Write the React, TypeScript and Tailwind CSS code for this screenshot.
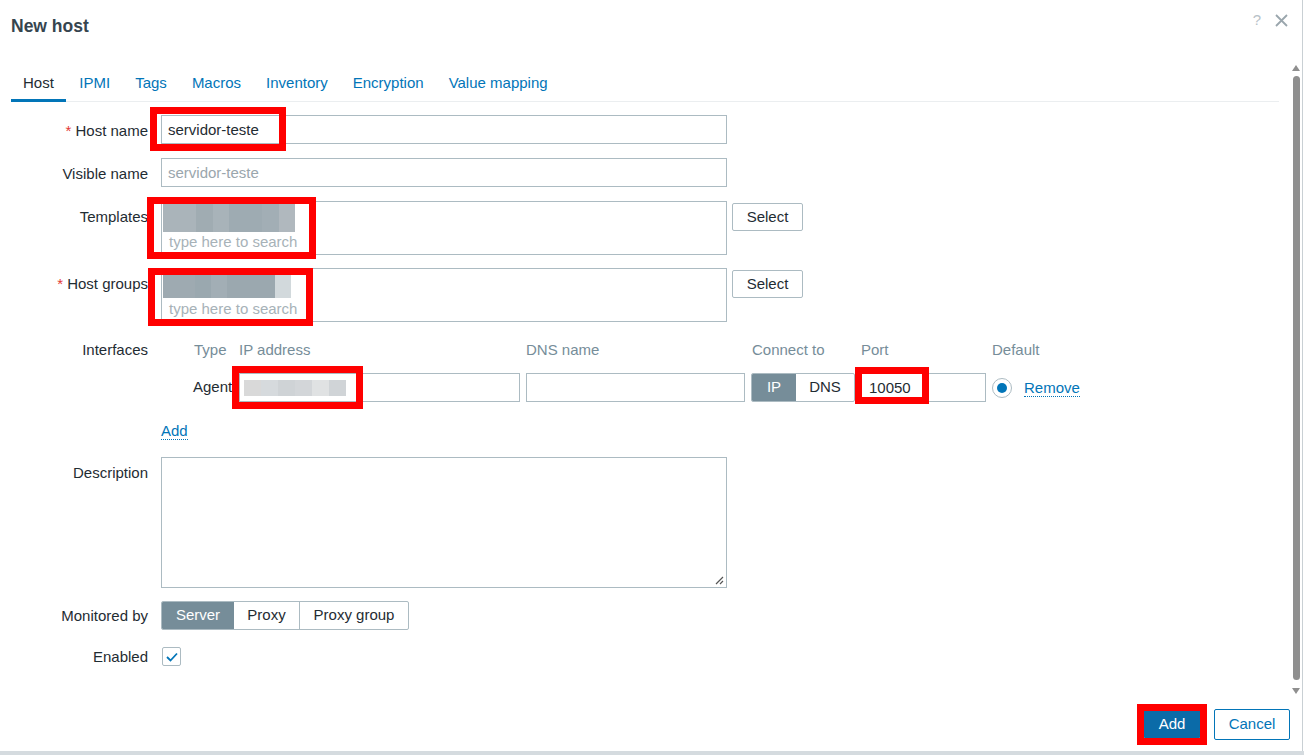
import React from 'react'

// ─── Small pieces ──────────────────────────────────────────────────────────

const font = "font-['Liberation_Sans',Arial,sans-serif]"

function Label({ text, required, pt = 'pt-[7px]' }: { text: string; required?: boolean; pt?: string }) {
  return (
    <div className={`w-[137px] shrink-0 ${pt} text-right leading-[18px] text-[#1f2c33]`}>
      {required && <span className="mr-[4px] text-[#e33734]">*</span>}
      {text}
    </div>
  )
}

function Blur({ blocks, h }: { blocks: [number, string][]; h: string }) {
  return (
    <div className={`flex ${h}`}>
      {blocks.map(([w, c], i) => (
        <div key={i} className={h} style={{ width: w, background: c }} />
      ))}
    </div>
  )
}

function RedBox({ x, y, w, h }: { x: number; y: number; w: number; h: number }) {
  return (
    <div
      className="pointer-events-none absolute border-[7px] border-[#ff0000]"
      style={{ left: x, top: y, width: w, height: h }}
    />
  )
}

function SelectBtn() {
  return (
    <button className="ml-[5px] mt-[2px] h-[28px] w-[71px] rounded-[2px] border border-[#acbbc2] bg-white text-[15px] text-[#1f2c33]">
      Select
    </button>
  )
}

// ─── Component ─────────────────────────────────────────────────────────────

export default function App() {
  const tabs = ['Host', 'IPMI', 'Tags', 'Macros', 'Inventory', 'Encryption', 'Value mapping']

  return (
    <div className={`relative h-[755px] w-[1304px] overflow-hidden bg-white text-[15px] text-[#1f2c33] ${font}`}>
      <div className="flex h-[751px] w-[1303px] flex-col border-r border-[#c9d0d4]">
        {/* Header */}
        <div className="flex h-[52px] shrink-0 items-center justify-between pl-[11px] pr-[14px]">
          <h1 className="text-[17.5px] font-bold text-[#36454f]">New host</h1>
          <div className="flex items-center gap-[14px] pb-[12px]">
            <span className="text-[15px] text-[#b8c2c8]">?</span>
            <svg width="13" height="13" viewBox="0 0 13 13" className="text-[#9aa6ad]">
              <path d="M1 1L12 12M12 1L1 12" stroke="currentColor" strokeWidth="1.8" />
            </svg>
          </div>
        </div>

        {/* Body */}
        <div className="flex h-[645px] shrink-0">
          <div className="flex-1 pl-[11px] pr-[12px] pt-[10px]">
            {/* Tabs */}
            <div className="flex border-b border-[#ebeef0]">
              {tabs.map((t, i) => (
                <div
                  key={t}
                  className={`-mb-px pb-[7px] pt-[12px] leading-[18px] ${
                    i === 0
                      ? 'border-b-[3px] border-[#0275b8] px-[12px] text-[#1f2c33]'
                      : 'border-b-[3px] border-transparent px-[12.5px] text-[#0275b8]'
                  } ${i === 1 ? 'ml-[1px]' : ''}`}
                >
                  {t}
                </div>
              ))}
            </div>

            {/* Form */}
            <div className="flex flex-col">
              <div className="mt-[13px] flex">
                <Label text="Host name" required />
                <div className="ml-[13px] flex h-[29px] w-[566px] items-center border border-[#acbbc2] px-[6px] pt-[2px]">servidor-teste</div>
              </div>

              <div className="mt-[14px] flex">
                <Label text="Visible name" />
                <div className="ml-[13px] flex h-[29px] w-[566px] items-center border border-[#acbbc2] px-[6px] pt-[2px] text-[#9aa6ad]">servidor-teste</div>
              </div>

              <div className="mt-[14px] flex">
                <Label text="Templates" />
                <div className="ml-[13px] h-[54px] w-[566px] border border-[#acbbc2] pl-[1px] pt-[2px]">
                  <Blur
                    h="h-[28px]"
                    blocks={[[33, '#aab4ba'], [17, '#a0acb2'], [16, '#a8b3b9'], [33, '#9eabb2'], [17, '#a2aeb5'], [16, '#b0b8be']]}
                  />
                  <div className="pl-[6px] pt-[1px] leading-[18px] text-[#a7b2b8]">type here to search</div>
                </div>
                <SelectBtn />
              </div>

              <div className="mt-[13px] flex">
                <Label text="Host groups" required />
                <div className="ml-[13px] h-[54px] w-[566px] border border-[#acbbc2] pl-[1px] pt-[2px]">
                  <Blur
                    h="h-[27px]"
                    blocks={[[32, '#9eaab1'], [16, '#9aa8af'], [16, '#a2aeb5'], [48, '#9ba8af'], [16, '#d2d9dc']]}
                  />
                  <div className="pl-[6px] pt-[2px] leading-[18px] text-[#a7b2b8]">type here to search</div>
                </div>
                <SelectBtn />
              </div>

              {/* Interfaces */}
              <div className="mt-[19px] flex">
                <div className="w-[137px] shrink-0 text-right leading-[18px]">Interfaces</div>
                <div className="ml-[13px] flex flex-col">
                  <div className="flex leading-[18px] text-[#768d99]">
                    <div className="w-[78px] pl-[33px]">Type</div>
                    <div className="w-[287px]">IP address</div>
                    <div className="w-[225px]">DNS name</div>
                    <div className="w-[110px] pl-[1px]">Connect to</div>
                    <div className="w-[131px]">Port</div>
                    <div>Default</div>
                  </div>
                  <div className="mt-[14px] flex h-[29px] items-center">
                    <div className="w-[78px] pl-[32px]">Agent</div>
                    <div className="flex h-[29px] w-[281px] items-center border border-[#acbbc2] pl-[4px]">
                      <Blur
                        h="h-[16px]"
                        blocks={[[17, '#d9d9d9'], [17, '#d6dadd'], [17, '#cfd3d6'], [17, '#d3d6d9'], [17, '#e0e2e3'], [17, '#d0d4d7']]}
                      />
                    </div>
                    <div className="ml-[6px] h-[29px] w-[219px] border border-[#acbbc2]" />
                    <div className="ml-[6px] flex h-[29px] w-[104px] overflow-hidden rounded-[2px] border border-[#acbbc2]">
                      <div className="flex w-[44px] items-center justify-center bg-[#768d99] text-white">IP</div>
                      <div className="flex flex-1 items-center justify-center">DNS</div>
                    </div>
                    <div className="ml-[6px] flex h-[29px] w-[125px] items-center border border-[#acbbc2] px-[7px] pt-[1px]">10050</div>
                    <div className="ml-[6px] flex h-[20px] w-[20px] items-center justify-center rounded-full border border-[#acbbc2]">
                      <div className="h-[10px] w-[10px] rounded-full bg-[#0275b8]" />
                    </div>
                    <span className="ml-[12px] border-b border-dotted border-[#0275b8] leading-[17px] text-[#0275b8]">Remove</span>
                  </div>
                </div>
              </div>

              <div className="mt-[20px] flex">
                <div className="w-[137px] shrink-0" />
                <span className="ml-[13px] border-b border-dotted border-[#0275b8] leading-[17px] text-[#0275b8]">Add</span>
              </div>

              <div className="mt-[17px] flex">
                <Label text="Description" />
                <div className="relative ml-[13px] h-[131px] w-[566px] border border-[#acbbc2]">
                  <svg width="9" height="9" viewBox="0 0 9 9" className="absolute bottom-[2px] right-[2px]">
                    <path d="M8 1L1 8M8 5L5 8" stroke="#555" strokeWidth="1.2" />
                  </svg>
                </div>
              </div>

              <div className="mt-[13px] flex">
                <Label text="Monitored by" pt="pt-[6px]" />
                <div className="ml-[13px] flex h-[29px] overflow-hidden rounded-[2px] border border-[#acbbc2]">
                  <div className="flex w-[72px] items-center justify-center bg-[#768d99] text-white">Server</div>
                  <div className="flex w-[66px] items-center justify-center border-r border-[#acbbc2]">Proxy</div>
                  <div className="flex w-[108px] items-center justify-center">Proxy group</div>
                </div>
              </div>

              <div className="mt-[17px] flex items-center">
                <div className="w-[137px] shrink-0 text-right leading-[18px]">Enabled</div>
                <div className="ml-[14px] flex h-[19px] w-[19px] items-center justify-center rounded-[2px] border border-[#acbbc2]">
                  <svg width="12" height="10" viewBox="0 0 12 10">
                    <path d="M1 5L4.5 8.5L11 1.5" fill="none" stroke="#0275b8" strokeWidth="1.8" />
                  </svg>
                </div>
              </div>
            </div>
          </div>

          {/* Scrollbar */}
          <div className="mr-[1px] mt-[10px] flex h-[635px] w-[10px] flex-col items-center">
            <svg width="8" height="6" viewBox="0 0 8 6" className="mt-[3px]">
              <path d="M4 0L8 6H0Z" fill="#8f8f8f" />
            </svg>
            <div className="mt-[5px] w-[7px] flex-1 rounded-[4px] bg-[#8f8f8f]" />
            <svg width="8" height="6" viewBox="0 0 8 6" className="mb-[3px] mt-[8px]">
              <path d="M0 0H8L4 6Z" fill="#8f8f8f" />
            </svg>
          </div>
        </div>

        {/* Footer */}
        <div className="flex flex-1 justify-end pr-[12px] pt-[12px]">
          <button className="h-[30px] w-[56px] rounded-[2px] bg-[#0b6ba8] text-[15px] text-white">Add</button>
          <button className="ml-[14px] h-[31px] w-[76px] rounded-[2px] border border-[#0275b8] bg-white text-[15px] text-[#0275b8]">
            Cancel
          </button>
        </div>
      </div>
      <div className="h-[4px] w-full bg-[#d5dbdf]" />

      {/* Annotation boxes */}
      <RedBox x={150} y={107} w={136} h={44} />
      <RedBox x={147} y={197} w={169} h={62} />
      <RedBox x={148} y={268} w={165} h={58} />
      <RedBox x={232} y={366} w={131} h={43} />
      <RedBox x={855} y={367} w={74} h={37} />
      <RedBox x={1137} y={704} w={70} h={41} />
    </div>
  )
}
